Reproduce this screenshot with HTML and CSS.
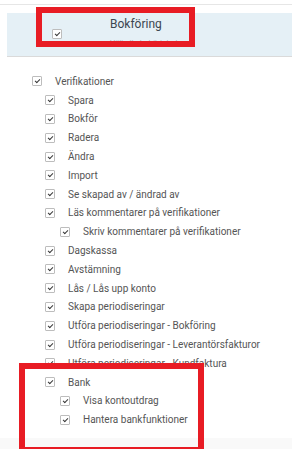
FILE: index.html
```html
<!DOCTYPE html>
<html lang="sv">
<head>
    <meta charset="UTF-8">
    <meta name="viewport" content="width=device-width, initial-scale=1.0">
    <title>Behörigheter - Bokföring</title>
    <link rel="stylesheet" href="styles.css">
</head>
<body>
    <div class="page">
        <div class="module-header">
            <span class="check"></span>
            <div class="module-title">
                <div class="title">Bokföring</div>
                <div class="subtitle">Välj alla behörigheter</div>
            </div>
        </div>

        <ul class="tree">
            <li class="row lvl-1"><span class="check"></span>Verifikationer</li>
            <li class="row lvl-2"><span class="check"></span>Spara</li>
            <li class="row lvl-2"><span class="check"></span>Bokför</li>
            <li class="row lvl-2"><span class="check"></span>Radera</li>
            <li class="row lvl-2"><span class="check"></span>Ändra</li>
            <li class="row lvl-2"><span class="check"></span>Import</li>
            <li class="row lvl-2"><span class="check"></span>Se skapad av / ändrad av</li>
            <li class="row lvl-2"><span class="check"></span>Läs kommentarer på verifikationer</li>
            <li class="row lvl-3"><span class="check"></span>Skriv kommentarer på verifikationer</li>
            <li class="row lvl-2"><span class="check"></span>Dagskassa</li>
            <li class="row lvl-2"><span class="check"></span>Avstämning</li>
            <li class="row lvl-2"><span class="check"></span>Lås / Lås upp konto</li>
            <li class="row lvl-2"><span class="check"></span>Skapa periodiseringar</li>
            <li class="row lvl-2"><span class="check"></span>Utföra periodiseringar - Bokföring</li>
            <li class="row lvl-2"><span class="check"></span>Utföra periodiseringar - Leverantörsfakturor</li>
            <li class="row lvl-2"><span class="check"></span>Utföra periodiseringar - Kundfaktura</li>
            <li class="row lvl-2"><span class="check"></span>Bank</li>
            <li class="row lvl-3"><span class="check"></span>Visa kontoutdrag</li>
            <li class="row lvl-3"><span class="check"></span>Hantera bankfunktioner</li>
        </ul>

        <div class="footer"></div>
    </div>

    <!-- annotation boxes drawn over the screenshot -->
    <div class="mark mark-header"></div>
    <div class="mark mark-bank"></div>
</body>
</html>
```

FILE: styles.css
```css
body {
    margin: 0;
    font-family: Roboto, "Liberation Sans", sans-serif;
    color: #555;
    background: #fff;
    overflow: hidden;
}
.page {
    position: relative;
    height: 449px;
    padding-top: 4px;
    box-sizing: border-box;
}
.page::before {
    content: "";
    display: block;
    border-top: 1px solid #e6e6e6;
}
.module-header {
    display: flex;
    margin: 8px 0 0 7px;
    height: 43px;
    background-color: #e5f0f6;
    border-bottom: 1px solid #dadada;
    padding-left: 45px;
}
.module-header .check {
    margin-top: 16px;
}
.module-title {
    margin-left: 48px;
}
.title {
    font-size: 12px;
    color: #3c4650;
    margin-top: 3px;
    line-height: 16px;
}
.subtitle {
    font-size: 8px;
    color: #a9b0b6;
    margin-top: 6px;
    line-height: 10px;
    white-space: nowrap;
}
.tree {
    list-style: none;
    margin: 15px 0 0 0;
    padding: 0;
}
.row {
    display: flex;
    align-items: center;
    height: 18.8px;
    font-size: 10px;
    white-space: nowrap;
}
.row .check {
    margin-right: 13px;
}
.lvl-1 {
    padding-left: 32px;
}
.lvl-2 {
    padding-left: 45px;
}
.lvl-3 {
    padding-left: 60px;
}
.check {
    position: relative;
    flex: none;
    width: 10px;
    height: 10px;
    box-sizing: border-box;
    border: 1px solid #bdbdbd;
    border-radius: 1px;
    background: #fff;
}
.check::after {
    content: "";
    position: absolute;
    left: 2px;
    top: 2px;
    width: 4px;
    height: 2px;
    border-left: 1px solid #3a3a3a;
    border-bottom: 1px solid #3a3a3a;
    transform: rotate(-45deg);
}
.footer {
    position: absolute;
    left: 0;
    right: 0;
    bottom: 0;
    height: 11px;
    background: #f9f9f9;
}
.mark {
    position: absolute;
    border: 6px solid #e81c24;
    box-sizing: border-box;
}
.mark-header {
    left: 36px;
    top: 7px;
    width: 159px;
    height: 40px;
}
.mark-bank {
    left: 19px;
    top: 363px;
    width: 185px;
    height: 90px;
}
```
